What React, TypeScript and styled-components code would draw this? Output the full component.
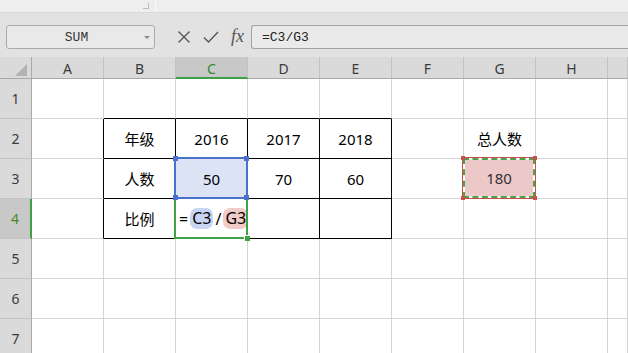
import React from 'react';
import styled, { createGlobalStyle } from 'styled-components';

const GlobalStyle = createGlobalStyle`
  html, body {
    margin: 0;
    padding: 0;
    background: #ffffff;
    overflow: hidden;
  }
`;

const COLS = ['A', 'B', 'C', 'D', 'E', 'F', 'G', 'H', 'I'];
const ROWS = [1, 2, 3, 4, 5, 6, 7];

// cells that belong to the black bordered table (B2:E4)
const TABLE_COLS = ['B', 'C', 'D', 'E'];
const TABLE_ROWS = [2, 3, 4];

const data: Record<string, string> = {
  B2: '年级',
  C2: '2016',
  D2: '2017',
  E2: '2018',
  B3: '人数',
  C3: '50',
  D3: '70',
  E3: '60',
  B4: '比例',
  G2: '总人数',
};

const inTable = (col: string, row: number) => TABLE_COLS.includes(col) && TABLE_ROWS.includes(row);

const App = () => {
  return (
    <Frame>
      <GlobalStyle />
      <TopStrip>
        <StripPane>
          <CornerMark />
        </StripPane>
      </TopStrip>

      <Toolbar>
        <NameBox>
          <span>SUM</span>
          <DropArrow />
        </NameBox>
        <ToolIcons>
          <svg width='14' height='14' viewBox='0 0 14 14'>
            <path d='M1.5 1.5 L12.5 12.5 M12.5 1.5 L1.5 12.5' stroke='#555' strokeWidth='1.3' fill='none' />
          </svg>
          <svg width='16' height='14' viewBox='0 0 16 14'>
            <path d='M1 7.5 L5.5 12 L15 2' stroke='#555' strokeWidth='1.4' fill='none' />
          </svg>
          <Fx>fx</Fx>
        </ToolIcons>
        <FormulaInput>=C3/G3</FormulaInput>
      </Toolbar>

      <Sheet>
        <CornerCell>
          <Triangle />
        </CornerCell>
        {COLS.map((c) => (
          <ColHead key={c} $active={c === 'C'}>
            {c === 'I' ? '' : c}
          </ColHead>
        ))}

        {ROWS.map((r) => (
          <React.Fragment key={r}>
            <RowHead $active={r === 4}>{r}</RowHead>
            {COLS.map((c) => {
              const id = `${c}${r}`;
              const blackRight = inTable(c, r) || (c === 'A' && TABLE_ROWS.includes(r));
              const blackBottom = inTable(c, r) || (r === 1 && TABLE_COLS.includes(c));

              if (id === 'C3') {
                return (
                  <Cell key={id} $blackRight $blackBottom $fill='#dbe3f5'>
                    {data[id]}
                    <RefBox>
                      <Handle $color='#4a72cc' style={{ top: -3, left: -3 }} />
                      <Handle $color='#4a72cc' style={{ top: -3, right: -3 }} />
                      <Handle $color='#4a72cc' style={{ bottom: -3, left: -3 }} />
                      <Handle $color='#4a72cc' style={{ bottom: -3, right: -3 }} />
                    </RefBox>
                  </Cell>
                );
              }

              if (id === 'C4') {
                return (
                  <Cell key={id} $blackRight $blackBottom $align='left'>
                    <FormulaText>
                      =<Pill $bg='#c8d5f2'>C3</Pill>/<Pill $bg='#f1cbc6'>G3</Pill>
                    </FormulaText>
                    <ActiveBox>
                      <FillHandle />
                    </ActiveBox>
                  </Cell>
                );
              }

              if (id === 'G3') {
                return (
                  <Cell key={id}>
                    <CopyBox>
                      <Ants>180</Ants>
                      <Handle $color='#c8504b' $size={4} style={{ top: -2, left: -2 }} />
                      <Handle $color='#c8504b' $size={4} style={{ top: -2, right: -2 }} />
                      <Handle $color='#c8504b' $size={4} style={{ bottom: -2, left: -2 }} />
                      <Handle $color='#c8504b' $size={4} style={{ bottom: -2, right: -2 }} />
                    </CopyBox>
                  </Cell>
                );
              }

              return (
                <Cell key={id} $blackRight={blackRight} $blackBottom={blackBottom}>
                  {data[id]}
                </Cell>
              );
            })}
          </React.Fragment>
        ))}
      </Sheet>
    </Frame>
  );
};

const Frame = styled.div`
  width: 628px;
  height: 353px;
  overflow: hidden;
  background: #ffffff;
  font-family: 'Noto Sans', 'Noto Sans CJK SC', sans-serif;
`;

const TopStrip = styled.div`
  height: 12px;
  background: #eeeeee;
  border-bottom: 1px solid #d9d9d9;
  display: flex;
`;

const StripPane = styled.div`
  width: 155px;
  height: 12px;
  border-right: 1px solid #f8f8f8;
  position: relative;
`;

const CornerMark = styled.div`
  position: absolute;
  right: 6px;
  top: 3px;
  width: 5px;
  height: 5px;
  border-right: 1px solid #bdbdbd;
  border-bottom: 1px solid #bdbdbd;
`;

const Toolbar = styled.div`
  height: 44px;
  background: #e2e2e2;
  display: flex;
  align-items: flex-start;
  padding: 12px 0 0 6px;
  box-sizing: border-box;
`;

const NameBox = styled.div`
  width: 149px;
  height: 24px;
  box-sizing: border-box;
  border: 1px solid #ababab;
  border-radius: 3px;
  background: #e9e9e9;
  display: flex;
  align-items: center;
  justify-content: center;
  position: relative;
  font-family: 'Liberation Mono', monospace;
  font-size: 13px;
  color: #333;
  padding-right: 8px;
`;

const DropArrow = styled.div`
  position: absolute;
  right: 4px;
  top: 10px;
  width: 0;
  height: 0;
  border-left: 3px solid transparent;
  border-right: 3px solid transparent;
  border-top: 3px solid #8a8a8a;
`;

const ToolIcons = styled.div`
  display: flex;
  align-items: center;
  height: 24px;
  gap: 12px;
  margin-left: 22px;
  width: 74px;
`;

const Fx = styled.span`
  font-family: 'Liberation Serif', serif;
  font-style: italic;
  font-size: 18px;
  color: #555;
  line-height: 1;
  margin-top: -3px;
`;

const FormulaInput = styled.div`
  flex: 1;
  height: 24px;
  box-sizing: border-box;
  border: 1px solid #a3a3a3;
  border-right: none;
  border-radius: 3px 0 0 3px;
  background: #eaeaea;
  font-family: 'Liberation Mono', monospace;
  font-size: 13px;
  color: #222;
  display: flex;
  align-items: center;
  padding-left: 10px;
`;

const Sheet = styled.div`
  display: grid;
  grid-template-columns: 32px repeat(8, 72px) 20px;
  grid-template-rows: 22px repeat(7, 40px);
`;

const CornerCell = styled.div`
  background: #dadada;
  border-right: 1px solid #a9a9a9;
  border-bottom: 1px solid #a9a9a9;
  position: relative;
`;

const Triangle = styled.div`
  position: absolute;
  right: 4px;
  bottom: 2px;
  width: 0;
  height: 0;
  border-left: 12px solid transparent;
  border-bottom: 12px solid #b3b3b3;
`;

const ColHead = styled.div<{ $active?: boolean }>`
  background: ${(p) => (p.$active ? '#c8c8c8' : '#dadada')};
  border-right: 1px solid #c2c2c2;
  border-bottom: ${(p) => (p.$active ? '2px solid #3fa142' : '1px solid #a9a9a9')};
  display: flex;
  align-items: center;
  justify-content: center;
  font-size: 14px;
  color: ${(p) => (p.$active ? '#2f8a33' : '#3a3a3a')};
  padding-top: 2px;
`;

const RowHead = styled.div<{ $active?: boolean }>`
  background: ${(p) => (p.$active ? '#c8c8c8' : '#dadada')};
  border-right: ${(p) => (p.$active ? '2px solid #3fa142' : '1px solid #a9a9a9')};
  border-bottom: 1px solid #c2c2c2;
  display: flex;
  align-items: center;
  justify-content: center;
  font-size: 14px;
  color: ${(p) => (p.$active ? '#4d8a2a' : '#3a3a3a')};
`;

const Cell = styled.div<{ $blackRight?: boolean; $blackBottom?: boolean; $fill?: string; $align?: string }>`
  position: relative;
  border-right: 1px solid ${(p) => (p.$blackRight ? '#000' : '#d4d4d4')};
  border-bottom: 1px solid ${(p) => (p.$blackBottom ? '#000' : '#d4d4d4')};
  background: ${(p) => p.$fill || 'transparent'};
  display: flex;
  align-items: center;
  justify-content: ${(p) => (p.$align === 'left' ? 'flex-start' : 'center')};
  font-size: 15px;
  color: #000;
`;

const RefBox = styled.div`
  position: absolute;
  top: -2px;
  left: -2px;
  right: -1px;
  bottom: -1px;
  border: 2px solid #4a72cc;
  z-index: 3;
`;

const ActiveBox = styled.div`
  position: absolute;
  top: -2px;
  left: -2px;
  right: -1px;
  bottom: -1px;
  border: 2px solid #3fa142;
  z-index: 2;
`;

const FillHandle = styled.div`
  position: absolute;
  right: -4px;
  bottom: -4px;
  width: 5px;
  height: 5px;
  background: #3fa142;
  border-left: 1px solid #fff;
  border-top: 1px solid #fff;
`;

const Handle = styled.div<{ $color: string; $size?: number }>`
  position: absolute;
  width: ${(p) => p.$size || 5}px;
  height: ${(p) => p.$size || 5}px;
  background: ${(p) => p.$color};
`;

const FormulaText = styled.div`
  display: flex;
  align-items: center;
  padding-left: 3px;
  gap: 1px;
  font-size: 16px;
`;

const Pill = styled.span<{ $bg: string }>`
  background: ${(p) => p.$bg};
  border-radius: 7px;
  padding: 0 2px;
  line-height: 21px;
  margin: 0 1px;
`;

const CopyBox = styled.div`
  position: absolute;
  top: -2px;
  left: -2px;
  right: -1px;
  bottom: -1px;
  border: 1px solid #c8504b;
  background: #ffffff;
  z-index: 2;
  display: flex;
`;

const Ants = styled.div`
  flex: 1;
  border: 2px dashed #4aa24a;
  background: #ecc9c8;
  background-clip: padding-box;
  display: flex;
  align-items: center;
  justify-content: center;
  font-size: 15px;
  color: #333;
`;

export default App;
